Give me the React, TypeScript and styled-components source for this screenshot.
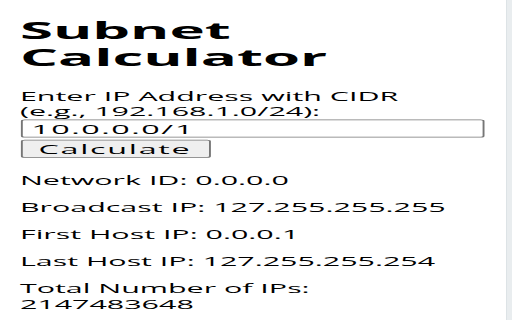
import styled, { createGlobalStyle } from "styled-components";

// the reference is a squashed capture: everything is laid out at its own size,
// then stretched wide and pressed flat by the Page transform
const SCALE_X = 1.9;
const SCALE_Y = 0.75;

const GlobalStyle = createGlobalStyle`
  html, body {
    margin: 0;
    padding: 0;
    width: 512px;
    height: 320px;
    overflow: hidden;
    background: #fff;
  }
  body {
    font-family: "Open Sans", "Liberation Sans", sans-serif;
    color: #000;
  }
`;

const Frame = styled.div`
  display: flex;
  width: 512px;
  height: 320px;
`;

const Viewport = styled.div`
  flex: 1;
  overflow: hidden;
`;

const Page = styled.main`
  width: 244px;
  padding: 0 10.5px;
  transform: scale(${SCALE_X}, ${SCALE_Y});
  transform-origin: 0 0;
`;

const Title = styled.h1`
  margin: 16px 0 0;
  font-size: 31.5px;
  line-height: 36px;
  font-weight: 700;
`;

const Form = styled.form`
  display: flex;
  flex-direction: column;
  align-items: flex-start;
  margin-top: 25px;
`;

const Label = styled.label`
  font-size: 16px;
  line-height: 20px;
`;

const Input = styled.input`
  box-sizing: border-box;
  width: 100%;
  height: 24px;
  margin: 1px 0 0;
  padding: 0 5px;
  border: 1px solid #767676;
  border-radius: 2px;
  font-family: inherit;
  font-size: 17px;
  letter-spacing: 0.8px;
  color: #000;
  background: #fff;
`;

const Button = styled.button`
  box-sizing: border-box;
  width: 100px;
  height: 24px;
  margin-top: 3px;
  padding: 0;
  border: 1px solid #767676;
  border-radius: 2px;
  background: #efefef;
  font-family: inherit;
  font-size: 17px;
  letter-spacing: 0.9px;
  color: #000;
`;

const Results = styled.div`
  margin-top: 20px;
`;

const Line = styled.p`
  margin: 0 0 15px;
  font-size: 16px;
  line-height: 21px;
`;

const ScrollTrack = styled.div`
  width: 5px;
  height: 320px;
  background: #e9edef;
  border-left: 1px solid #dde3e6;
`;

export default function App() {
  const results = [
    "Network ID: 0.0.0.0",
    "Broadcast IP: 127.255.255.255",
    "First Host IP: 0.0.0.1",
    "Last Host IP: 127.255.255.254",
    "Total Number of IPs: 2147483648",
  ];

  return (
    <>
      <GlobalStyle />
      <Frame>
        <Viewport>
          <Page>
            <Title>Subnet Calculator</Title>
            <Form onSubmit={(e) => e.preventDefault()}>
              <Label htmlFor="ip">
                Enter IP Address with CIDR
                <br />
                (e.g., 192.168.1.0/24):
              </Label>
              <Input id="ip" type="text" defaultValue="10.0.0.0/1" />
              <Button type="submit">Calculate</Button>
            </Form>
            <Results>
              {results.map((r) => (
                <Line key={r}>{r}</Line>
              ))}
            </Results>
          </Page>
        </Viewport>
        <ScrollTrack />
      </Frame>
    </>
  );
}
